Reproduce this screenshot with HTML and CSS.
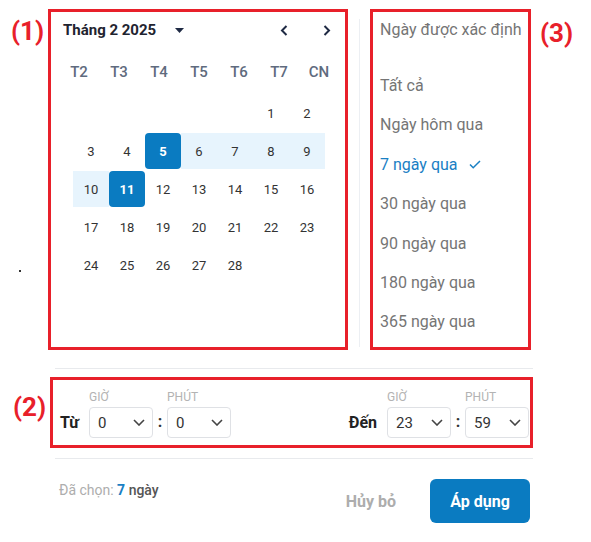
FILE: index.html
```html
<!DOCTYPE html>
<html lang="vi">
<head>
  <meta charset="UTF-8">
  <title>Chọn khoảng ngày</title>
  <link rel="stylesheet" href="styles.css">
</head>
<body>
  <div class="top">
    <div class="tag">
      <div>(1)</div>
      <div class="dot"></div>
    </div>
    <div class="cal mark">
      <div class="cal-head">
        <span class="cal-title">Tháng 2 2025</span>
        <svg class="caret" width="9" height="5" viewBox="0 0 9 5"><path d="M0 0h9L4.5 5z" fill="#1f2a44"/></svg>
        <div class="nav">
          <svg width="8" height="11" viewBox="0 0 8 11"><path d="M6.5 1L2 5.5 6.5 10" fill="none" stroke="#1f2a44" stroke-width="2"/></svg>
          <svg width="8" height="11" viewBox="0 0 8 11"><path d="M1.5 1L6 5.5 1.5 10" fill="none" stroke="#1f2a44" stroke-width="2"/></svg>
        </div>
      </div>
      <div class="weekdays">
        <span>T2</span><span>T3</span><span>T4</span><span>T5</span><span>T6</span><span>T7</span><span>CN</span>
      </div>
      <div class="days" id="days"></div>
    </div>
    <div class="vline"></div>
    <div class="presets mark">
      <div class="presets-title">Ngày được xác định</div>
      <ul class="preset-list">
        <li>Tất cả</li>
        <li>Ngày hôm qua</li>
        <li class="active">7 ngày qua
          <svg class="check" width="12" height="9" viewBox="0 0 12 9"><path d="M1 4.5l3.2 3.2L11 1" fill="none" stroke="#1a80c4" stroke-width="1.5"/></svg>
        </li>
        <li>30 ngày qua</li>
        <li>90 ngày qua</li>
        <li>180 ngày qua</li>
        <li>365 ngày qua</li>
      </ul>
    </div>
    <div class="tag tag3">(3)</div>
  </div>

  <div class="hline"></div>

  <div class="mid">
    <div class="tag tag2">(2)</div>
    <div class="time mark">
      <div class="time-group">
        <span class="time-label">Từ</span>
        <div class="field">
          <span class="field-label">Giờ</span>
          <div class="select">0<svg width="12" height="7" viewBox="0 0 12 7"><path d="M1 1l5 5 5-5" fill="none" stroke="#444" stroke-width="1.6"/></svg></div>
        </div>
        <span class="colon">:</span>
        <div class="field">
          <span class="field-label">Phút</span>
          <div class="select">0<svg width="12" height="7" viewBox="0 0 12 7"><path d="M1 1l5 5 5-5" fill="none" stroke="#444" stroke-width="1.6"/></svg></div>
        </div>
      </div>
      <div class="time-group">
        <span class="time-label">Đến</span>
        <div class="field">
          <span class="field-label">Giờ</span>
          <div class="select">23<svg width="12" height="7" viewBox="0 0 12 7"><path d="M1 1l5 5 5-5" fill="none" stroke="#444" stroke-width="1.6"/></svg></div>
        </div>
        <span class="colon">:</span>
        <div class="field">
          <span class="field-label">Phút</span>
          <div class="select">59<svg width="12" height="7" viewBox="0 0 12 7"><path d="M1 1l5 5 5-5" fill="none" stroke="#444" stroke-width="1.6"/></svg></div>
        </div>
      </div>
    </div>
  </div>

  <div class="hline hline2"></div>

  <div class="footer">
    <span class="picked">Đã chọn: <b>7</b> <em>ngày</em></span>
    <button class="cancel">Hủy bỏ</button>
    <button class="apply">Áp dụng</button>
  </div>

  <script>
    // Tháng 2/2025 bắt đầu vào thứ 7
    const days = document.getElementById("days");
    const offset = 5;
    for (let i = 0; i < offset; i++) {
      days.appendChild(document.createElement("span"));
    }
    for (let d = 1; d <= 28; d++) {
      const cell = document.createElement("span");
      cell.className = "day";
      if (d === 5 || d === 11) cell.classList.add("sel");
      else if (d > 5 && d < 11) cell.classList.add("range");
      cell.textContent = d;
      days.appendChild(cell);
    }
  </script>
</body>
</html>
```

FILE: styles.css
```css
body {
  margin: 0;
  font-family: Roboto, "Noto Sans", sans-serif;
  color: #333;
  background: #fff;
}
.mark {
  border: 3px solid #e8202a;
  box-sizing: border-box;
}
.tag {
  color: #e8202a;
  font-weight: bold;
  font-size: 26px;
  line-height: 28px;
}
.top {
  display: flex;
  margin-top: 9px;
  height: 341px;
}
.top > .tag {
  width: 48px;
  box-sizing: border-box;
  padding: 8px 0 0 11px;
}
.dot {
  width: 2px;
  height: 2px;
  background: #333;
  margin: 225px 0 0 8px;
}
.top > .tag3 {
  width: auto;
  padding: 10px 0 0 9px;
}

/* lịch */
.cal {
  width: 300px;
}
.cal-head {
  display: flex;
  align-items: center;
  height: 36px;
  padding-left: 12px;
}
.cal-title {
  font-size: 15px;
  font-weight: bold;
  color: #1f2430;
}
.caret {
  margin-left: 19px;
}
.nav {
  margin-left: auto;
  display: flex;
  gap: 35px;
  padding-right: 14px;
}
.weekdays {
  display: grid;
  grid-template-columns: repeat(7, 40px);
  margin: 12px 0 0 8px;
  line-height: 24px;
  font-size: 15px;
  font-weight: 500;
  color: #5f6b7e;
  text-align: center;
}
.days {
  display: grid;
  grid-template-columns: repeat(7, 36px);
  grid-auto-rows: 36px;
  row-gap: 2px;
  margin: 11px 0 0 22px;
  font-size: 13px;
}
.day {
  display: flex;
  align-items: center;
  justify-content: center;
}
.day.range {
  background: #e7f4fd;
}
.day.sel {
  background: #0a7bc1;
  color: #fff;
  font-weight: bold;
  border-radius: 4px;
}
.vline {
  width: 1px;
  background: #eceff3;
  margin: 10px 10px 3px 11px;
}

/* danh sách */
.presets {
  width: 161px;
  padding-left: 7px;
  font-size: 16px;
  color: #757575;
}
.presets-title {
  line-height: 36px;
}
.preset-list {
  list-style: none;
  margin: 18px 0 0;
  padding: 0;
}
.preset-list li {
  line-height: 39.4px;
  display: flex;
  align-items: center;
}
.preset-list li.active {
  color: #1a80c4;
}
.check {
  margin-left: 11px;
}

.hline {
  height: 1px;
  background: #e8eaed;
  margin: 18px 0 0 55px;
  width: 478px;
}
.hline2 {
  margin-top: 10px;
}

/* giờ */
.mid {
  display: flex;
  margin-top: 8px;
}
.tag2 {
  width: 50px;
  box-sizing: border-box;
  padding: 16px 0 0 13px;
}
.time {
  width: 483px;
  height: 71px;
  display: flex;
  justify-content: space-between;
  align-items: flex-end;
  padding: 0 1px 7px 7px;
}
.time-group {
  display: flex;
  align-items: flex-end;
}
.time-label {
  font-size: 16px;
  font-weight: bold;
  color: #222;
  line-height: 30px;
  margin-right: 10px;
}
.field {
  display: flex;
  flex-direction: column;
}
.field-label {
  font-size: 12px;
  line-height: 14px;
  text-transform: uppercase;
  color: #b3b3b3;
  margin-bottom: 3px;
}
.select {
  width: 64px;
  height: 31px;
  box-sizing: border-box;
  border: 1px solid #dfe1e5;
  border-radius: 4px;
  display: flex;
  align-items: center;
  justify-content: space-between;
  padding: 0 7px 0 8px;
  font-size: 15px;
  color: #333;
}
.colon {
  width: 14px;
  text-align: center;
  font-size: 16px;
  font-weight: bold;
  line-height: 32px;
}

/* chân */
.footer {
  display: flex;
  align-items: center;
  margin: 20px 0 0 59px;
  width: 471px;
  height: 44px;
}
.picked {
  align-self: flex-start;
  line-height: 22px;
  font-size: 14px;
  color: #adadad;
  margin-right: auto;
}
.picked b {
  color: #1a80c4;
}
.picked em {
  font-style: normal;
  font-weight: 500;
  color: #555;
}
button {
  font-family: inherit;
  border: none;
  cursor: pointer;
}
.cancel {
  background: none;
  font-size: 16px;
  font-weight: bold;
  color: #adadad;
  padding: 0;
  margin-right: 34px;
}
.apply {
  width: 100px;
  height: 44px;
  background: #0a7bc1;
  color: #fff;
  font-size: 16px;
  font-weight: bold;
  border-radius: 6px;
}
```
